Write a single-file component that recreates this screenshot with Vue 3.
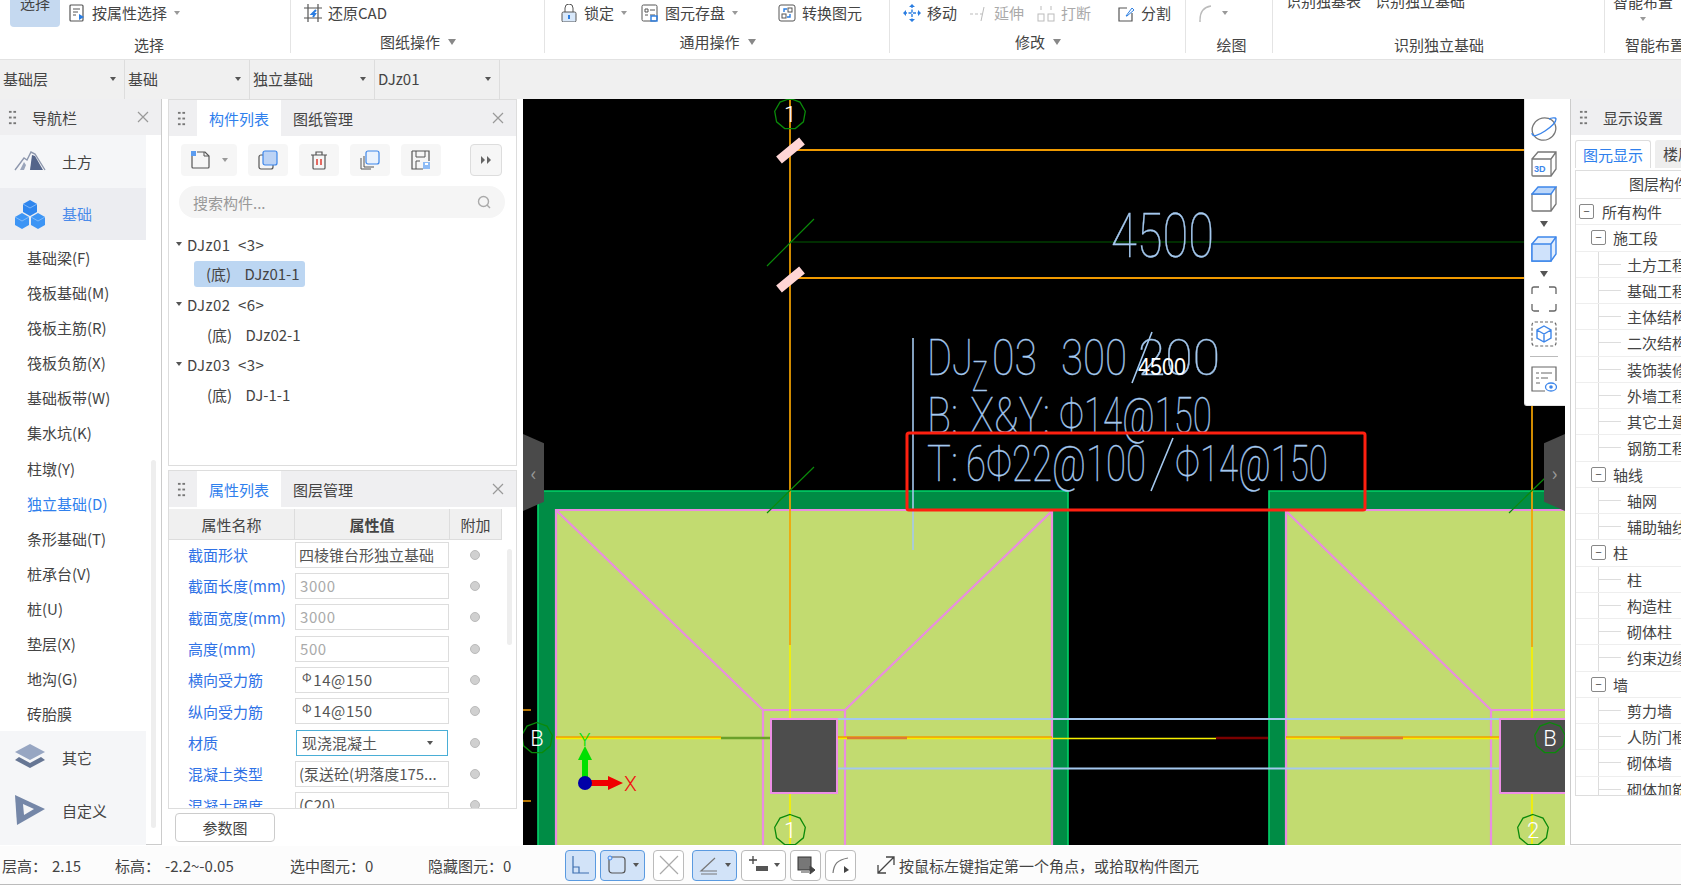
<script setup>
const icons = {
  attr: '<rect x="2" y="1" width="13" height="16" rx="1" fill="none" stroke="#555" stroke-width="1.2"/><path d="M5 5h7M5 8h5M5 11h3" stroke="#555"/><path d="M11 10l5 3-5 3z" fill="#2a7de1"/>',
  cad: '<path d="M4 0v18M14 0v18M0 4h18M0 14h18" stroke="#555" stroke-width="1.2"/><path d="M12 6l-4 4h3l-2 3" stroke="#2a7de1" stroke-width="2" fill="none"/>',
  lock: '<rect x="2" y="8" width="14" height="10" rx="1.5" fill="#d8e8fa" stroke="#555"/><path d="M5 8V4a4 4 0 018 0v4" fill="none" stroke="#555"/><rect x="8" y="11" width="2" height="4" fill="#2a7de1"/>',
  save: '<rect x="1" y="1" width="15" height="16" rx="1.5" fill="none" stroke="#555"/><path d="M4 5h3v3H4zM9 6h5M4 11h3M9 11h5" stroke="#555" fill="none"/><rect x="10" y="12" width="6" height="5" fill="none" stroke="#2a7de1" stroke-width="1.4"/>',
  conv: '<rect x="1" y="1" width="16" height="16" rx="2" fill="none" stroke="#555"/><path d="M6 8V5h3M12 10v3H9" stroke="#2a7de1" fill="none" stroke-width="1.4"/><rect x="10" y="4" width="4" height="4" fill="none" stroke="#555"/><rect x="4" y="10" width="4" height="4" fill="none" stroke="#555"/>',
  move: '<path d="M9 1v16M1 9h16" stroke="#2a7de1" stroke-width="1.4" stroke-dasharray="3 1.5"/><path d="M9 0l3 3H6zM9 18l3-3H6zM0 9l3-3v6zM18 9l-3-3v6z" fill="#2a7de1"/>',
  ext: '<path d="M0 10h3M5 10h3M10 10h2" stroke="#bbb"/><path d="M14 3l-3 14" stroke="#bbb"/>',
  brk: '<path d="M4 2v4M14 2v4" stroke="#bbb"/><rect x="1" y="10" width="6" height="7" fill="none" stroke="#bbb"/><rect x="11" y="10" width="6" height="7" fill="none" stroke="#bbb"/>',
  split: '<path d="M10 4H2v13h13V9" fill="none" stroke="#555" stroke-width="1.2"/><path d="M9 12l6-8 2 2-7 6z" fill="none" stroke="#2a7de1"/>',
  arc: '<path d="M3 16c0-8 4-13 11-14" fill="none" stroke="#bbb" stroke-width="1.3"/><circle cx="3" cy="17" r="1" fill="#bbb"/>'
}
const groups = [
  { w: 291, pad: 68, cls: 'g-sel', label: '选择', items: [{ i: 'attr', t: '按属性选择', c: 1, ml: 0 }] },
  { w: 254, pad: 13, label: '图纸操作', c: 1, items: [{ i: 'cad', t: '还原CAD', ml: 0 }] },
  { w: 345, pad: 15, label: '通用操作', c: 1, items: [{ i: 'lock', t: '锁定', c: 1, ml: 0 }, { i: 'save', t: '图元存盘', c: 1, ml: 14 }, { i: 'conv', t: '转换图元', ml: 40 }] },
  { w: 296, pad: 13, label: '修改', c: 1, items: [{ i: 'move', t: '移动', ml: 0 }, { i: 'ext', t: '延伸', g: 1, ml: 13 }, { i: 'brk', t: '打断', g: 1, ml: 13 }, { i: 'split', t: '分割', ml: 26 }] },
  { w: 87, pad: 11, cls: 'g-draw', label: '绘图', items: [{ i: 'arc', t: '', c: 1, g: 1, ml: 0 }] }
]
const selects = ['基础层', '基础', '独立基础', 'DJz01']
const navList = ['基础梁(F)', '筏板基础(M)', '筏板主筋(R)', '筏板负筋(X)', '基础板带(W)', '集水坑(K)', '柱墩(Y)', '独立基础(D)', '条形基础(T)', '桩承台(V)', '桩(U)', '垫层(X)', '地沟(G)', '砖胎膜']
const tree = [
  { t: 'DJz01  <3>', top: 1 }, { t: '(底)    DJz01-1', sel: 1 },
  { t: 'DJz02  <6>', top: 1 }, { t: '(底)    DJz02-1' },
  { t: 'DJz03  <3>', top: 1 }, { t: '(底)    DJ-1-1' }
]
const props = [
  { n: '截面形状', v: '四棱锥台形独立基础' },
  { n: '截面长度(mm)', v: '3000', dis: 1 },
  { n: '截面宽度(mm)', v: '3000', dis: 1 },
  { n: '高度(mm)', v: '500', dis: 1 },
  { n: '横向受力筋', v: '14@150', bar: 1 },
  { n: '纵向受力筋', v: '14@150', bar: 1 },
  { n: '材质', v: '现浇混凝土', sel: 1 },
  { n: '混凝土类型', v: '(泵送砼(坍落度175...' },
  { n: '混凝土强度', v: '(C20)' }
]
const layers = [
  ['所有构件', 0], ['施工段', 1], ['土方工程', 2], ['基础工程', 2], ['主体结构工程', 2], ['二次结构工程', 2], ['装饰装修工程', 2], ['外墙工程', 2], ['其它土建', 2], ['钢筋工程', 2],
  ['轴线', 1], ['轴网', 2], ['辅助轴线', 2], ['柱', 1], ['柱', 2], ['构造柱', 2], ['砌体柱', 2], ['约束边缘', 2], ['墙', 1], ['剪力墙', 2], ['人防门框墙', 2], ['砌体墙', 2], ['砌体加筋', 2]
]
const stats = [['层高：', '2.15'], ['标高：', '-2.2~-0.05'], ['选中图元：', '0'], ['隐藏图元：', '0']]
const poly = (x, y, r) => Array.from({ length: 9 }, (_, k) => {
  const a = (k / 9) * Math.PI * 2 - Math.PI / 2
  return (x + r * Math.cos(a)).toFixed(1) + ',' + (y + r * Math.sin(a)).toFixed(1)
}).join(' ')
const bubbles = [
  { x: 790, y: 114, t: '1' }, { x: 790, y: 830, t: '1' }, { x: 1533, y: 830, t: '2' },
  { x: 537, y: 738, t: 'B' }, { x: 1550, y: 738, t: 'B' }
].map(b => ({ ...b, pts: poly(b.x, b.y, 15.5) }))
</script>

<template>
  <div class="app">
    <header class="ribbon">
      <section v-for="g in groups" :key="g.label" class="group" :class="g.cls" :style="{ width: g.w + 'px' }">
        <div v-if="g.cls === 'g-sel'" class="pick">选择</div>
        <div class="row" :style="{ paddingLeft: g.pad + 'px' }">
          <div v-for="it in g.items" :key="it.i" class="ritem" :class="{ gray: it.g }" :style="{ marginLeft: it.ml + 'px' }">
            <svg width="18" height="18" viewBox="0 0 18 18" v-html="icons[it.i]"></svg>
            <span v-if="it.t">{{ it.t }}</span>
            <i v-if="it.c" class="tri small"></i>
          </div>
        </div>
        <div class="glabel" :class="{ plain: !g.c }">{{ g.label }}<i v-if="g.c" class="tri"></i></div>
      </section>
      <section class="group rec">
        <div class="rec-top"><span>识别独基表</span><span>识别独立基础</span></div>
        <div class="glabel plain">识别独立基础</div>
      </section>
      <section class="group smart">
        <div class="smart-top"><span>智能布置</span><i class="tri small"></i></div>
        <div class="glabel plain">智能布置</div>
      </section>
    </header>

    <div class="selbar">
      <div v-for="s in selects" :key="s" class="sel"><span>{{ s }}</span><i class="tri small dark"></i></div>
    </div>

    <main class="main">
      <aside class="nav">
        <div class="phead">
          <span class="dots"></span><span class="ptitle nav-title">导航栏</span>
          <svg class="close" width="12" height="12" viewBox="0 0 12 12"><path d="M1 1l10 10M11 1L1 11" stroke="#999" stroke-width="1.2"/></svg>
        </div>
        <div class="navcol">
          <div class="navbig">
            <svg width="32" height="24" viewBox="0 0 32 24"><path d="M1 21L10 9l3 2 4-8 4 2 10 16" fill="none" stroke="#8d97ad" stroke-width="1.4"/><path d="M16 21l2-15 3 1 8 14z" fill="#54658a"/><path d="M6 21l4-8 2 3-2 5z" fill="#9aa5bb"/></svg>
            <span>土方</span>
          </div>
          <div class="navbig active">
            <svg width="32" height="30" viewBox="0 0 32 30"><path d="M16 1l7 4v8l-7 4-7-4V5z" fill="#2f86ee"/><path d="M8 14l7 4v8l-7 4-7-4v-8z" fill="#3d95f5"/><path d="M24 14l7 4v8l-7 4-7-4v-8z" fill="#3d95f5"/><path d="M9 5l7 4 7-4M1 18l7 4 7-4M17 18l7 4 7-4" fill="none" stroke="#8fc2fa" stroke-width=".8"/></svg>
            <span>基础</span>
          </div>
          <div class="navlist">
            <div v-for="n in navList" :key="n" class="navitem" :class="{ cur: n.startsWith('独立') }">{{ n }}</div>
          </div>
          <div class="navbig">
            <svg width="32" height="30" viewBox="0 0 32 30"><path d="M16 1l15 8-15 8L1 9z" fill="#97a6c2"/><path d="M5 14l11 6 11-6 4 3-15 8-15-8z" fill="#667694"/></svg>
            <span>其它</span>
          </div>
          <div class="navbig last">
            <svg width="32" height="32" viewBox="0 0 32 32"><path d="M1 1l30 14L3 31z" fill="#7587a8"/><path d="M9 10l11 5-10 6z" fill="#f5f6f8"/></svg>
            <span>自定义</span>
          </div>
        </div>
        <div class="navscroll"></div>
      </aside>

      <div class="mid">
        <section class="panel p1">
          <div class="phead">
            <span class="dots"></span>
            <span class="tab on">构件列表</span><span class="tab">图纸管理</span>
            <svg class="close" width="12" height="12" viewBox="0 0 12 12"><path d="M1 1l10 10M11 1L1 11" stroke="#999" stroke-width="1.2"/></svg>
          </div>
          <div class="tools">
            <div class="tbtn wide">
              <svg width="20" height="20" viewBox="0 0 20 20"><path d="M2 5v12a1 1 0 001 1h15a1 1 0 001-1V6l-4-4H7" fill="none" stroke="#555" stroke-width="1.2"/><path d="M14 2v4h5" fill="none" stroke="#555"/><rect x="1" y="1" width="5" height="5" fill="#5b9cf0"/></svg>
              <i class="tri small"></i>
            </div>
            <div class="tbtn"><svg width="20" height="20" viewBox="0 0 20 20"><rect x="1" y="5" width="14" height="14" rx="2" fill="none" stroke="#555" stroke-width="1.2"/><rect x="5" y="1" width="14" height="14" rx="2" fill="#bcd3f5" stroke="#3d86ea" stroke-width="1.2"/></svg></div>
            <div class="tbtn"><svg width="20" height="20" viewBox="0 0 20 20"><path d="M2 5h16M7 5V2h6v3M4 5v13a1 1 0 001 1h10a1 1 0 001-1V5" fill="none" stroke="#555" stroke-width="1.2"/><path d="M8 9v6M12 9v6" stroke="#e0483e" stroke-width="1.6"/></svg></div>
            <div class="tbtn"><svg width="20" height="20" viewBox="0 0 20 20"><rect x="6" y="1" width="13" height="13" rx="2" fill="#eaf2fd" stroke="#3d86ea" stroke-width="1.2"/><path d="M4 6v11h10M1 8v11h10" fill="none" stroke="#555"/></svg></div>
            <div class="tbtn"><svg width="20" height="20" viewBox="0 0 20 20"><path d="M1 1h17v10M12 19H1V1" fill="none" stroke="#555" stroke-width="1.2"/><path d="M5 1v6h9V1M5 19v-8h4" fill="none" stroke="#555"/><path d="M12 12h7v7h-7z" fill="#8dbbf5"/><path d="M14 13h3v2h-3z" fill="#fff"/></svg></div>
            <div class="tbtn end"><svg width="10" height="8" viewBox="0 0 10 8"><path d="M0 0l4 4-4 4zM6 0l4 4-4 4z" fill="#666"/></svg></div>
          </div>
          <div class="search">
            <span>搜索构件...</span>
            <svg width="14" height="14" viewBox="0 0 14 14"><circle cx="6.5" cy="6.5" r="5" fill="none" stroke="#aaa" stroke-width="1.4"/><path d="M10 10l3 3" stroke="#aaa" stroke-width="1.4"/></svg>
          </div>
          <div class="tree">
            <div v-for="r in tree" :key="r.t" class="trow" :class="{ top: r.top }">
              <i v-if="r.top" class="tri small dark"></i>
              <span :class="{ chosen: r.sel }">{{ r.t }}</span>
            </div>
          </div>
        </section>

        <section class="panel p2">
          <div class="phead">
            <span class="dots"></span>
            <span class="tab on">属性列表</span><span class="tab">图层管理</span>
            <svg class="close" width="12" height="12" viewBox="0 0 12 12"><path d="M1 1l10 10M11 1L1 11" stroke="#999" stroke-width="1.2"/></svg>
          </div>
          <div class="thead"><span>属性名称</span><b>属性值</b><span>附加</span></div>
          <div class="tbody">
            <div v-for="p in props" :key="p.n" class="prow">
              <span class="pname">{{ p.n }}</span>
              <span class="pval" :class="{ dis: p.dis, focus: p.sel, num: p.dis || p.bar }">
                <sup v-if="p.bar">Φ</sup>{{ p.v }}<i v-if="p.sel" class="tri small dark"></i>
              </span>
              <span class="radio"></span>
            </div>
            <div class="pscroll"></div>
          </div>
        </section>
        <div class="pbtn"><button>参数图</button></div>
      </div>

      <div class="canvas">
        <svg class="cad" width="1042" height="746" viewBox="523 99 1042 746">
          <rect x="523" y="99" width="1042" height="746" fill="#000"/>
          <!-- walls -->
          <path d="M538 845V491H1068V845H1053V510H556V845ZM1269 845V491H1565V510H1286V845Z" fill="#008c45"/>
          <path d="M538 845V491H1068V845M1269 845V491H1565" fill="none" stroke="#00d468" stroke-width="1.6"/>
          <rect x="556" y="510" width="496" height="335" fill="#c2db70"/>
          <rect x="1286" y="510" width="279" height="335" fill="#c2db70"/>
          <g fill="none" stroke="#e98de0" stroke-width="2.2">
            <path d="M556 845V510H1052V845"/>
            <path d="M1565 510H1286V845"/>
            <path d="M557 511L763 710H845L1052 511"/>
            <path d="M763 710V845M845 710V845"/>
            <path d="M1286 511L1491 710H1565M1491 710V845"/>
          </g>
          <!-- axis lines -->
          <path d="M790 99V645M1532 406V647" stroke="#f5a300" stroke-width="1.7"/>
          <path d="M790 645V719M790 793V845M1532 647V719M1532 793V845" stroke="#f6f000" stroke-width="1.7"/>
          <path d="M790 150H1524M790 278H1524" stroke="#f09a00" stroke-width="2"/>
          <path d="M790 242H1524" stroke="#005a00" stroke-width="1.2"/>
          <path d="M767 266L814 219M767 513L814 467M1509 513L1545 478" stroke="#0a8a0a" stroke-width="1.2"/>
          <path d="M779 160L802 141M779 289L802 270" stroke="#ffd6d6" stroke-width="9"/>
          <path d="M837 719H1500M837 768.5H1500" stroke="#a4c8ee" stroke-width="2"/>
          <path d="M556 737.5H721M837 737.5H1052M1286 737.5H1500" stroke="#f0a000" stroke-width="2.6"/>
          <path d="M556 738.5H721M837 738.5H1216M1286 738.5H1500" stroke="#f6f000" stroke-width="1.4"/>
          <path d="M721 738H771" stroke="#6aa02a" stroke-width="2.4"/>
          <path d="M847 738H907M1340 738H1403" stroke="#dd7a35" stroke-width="2.4"/>
          <path d="M1216 738H1268" stroke="#7a0000" stroke-width="2.4"/>
          <path d="M523 710H531M523 801H531" stroke="#f09a00" stroke-width="1.5"/>
          <rect x="771" y="719" width="66" height="74" fill="#4d4d4d" stroke="#ee8fe6" stroke-width="2"/>
          <rect x="1500" y="719" width="70" height="74" fill="#4d4d4d" stroke="#ee8fe6" stroke-width="2"/>
          <path d="M913 338V550" stroke="#a4c8ee" stroke-width="1.6"/>
          <path d="M1152 332L1132 383M1173 438L1151 491" stroke="#a4c8ee" stroke-width="1.6"/>
          <!-- cad text -->
          <g class="cadtext">
            <text x="1111" y="257" font-size="62" textLength="103" lengthAdjust="spacingAndGlyphs">4500</text>
            <text x="927" y="375" font-size="50" textLength="46" lengthAdjust="spacingAndGlyphs">DJ</text>
            <text x="972" y="391" font-size="42" textLength="16" lengthAdjust="spacingAndGlyphs">Z</text>
            <text x="992" y="375" font-size="50" textLength="45" lengthAdjust="spacingAndGlyphs">03</text>
            <text x="1061" y="375" font-size="50" textLength="66" lengthAdjust="spacingAndGlyphs">300</text>
            <text x="1138" y="375" font-size="50" textLength="82" lengthAdjust="spacingAndGlyphs">200</text>
            <text x="927" y="433" font-size="50" textLength="31" lengthAdjust="spacingAndGlyphs">B:</text>
            <text x="970" y="433" font-size="50" textLength="80" lengthAdjust="spacingAndGlyphs">X&amp;Y:</text>
            <text x="1059" y="433" font-size="50" textLength="153" lengthAdjust="spacingAndGlyphs">Φ14@150</text>
            <text x="927" y="481" font-size="50" textLength="31" lengthAdjust="spacingAndGlyphs">T:</text>
            <text x="966" y="481" font-size="50" textLength="180" lengthAdjust="spacingAndGlyphs">6Φ22@100</text>
            <text x="1175" y="481" font-size="50" textLength="153" lengthAdjust="spacingAndGlyphs">Φ14@150</text>
          </g>
          <text class="small4500" x="1138" y="375" font-size="24" textLength="48" lengthAdjust="spacingAndGlyphs">4500</text>
          <!-- axis bubbles -->
          <polygon v-for="b in bubbles" :key="b.x + b.t" :points="b.pts" fill="none" stroke="#0a8a0a" stroke-width="1.3"/>
          <g class="bub" text-anchor="middle" font-size="22">
            <text v-for="b in bubbles" :key="b.x + b.t" :x="b.x" :y="b.y + 8">{{ b.t }}</text>
          </g>
          <!-- origin -->
          <path d="M585 782V760" stroke="#00e000" stroke-width="6"/><path d="M578 760L585 746L592 760Z" fill="#00e000"/>
          <path d="M586 783H608" stroke="#f00000" stroke-width="6"/><path d="M608 776L623 783L608 790Z" fill="#f00000"/>
          <circle cx="585" cy="783" r="7" fill="#0000a8"/>
          <text x="579" y="746" font-size="19" fill="#00e000" class="thin">Y</text>
          <text x="624" y="791" font-size="21" fill="#f01010" class="thin">X</text>
          <rect x="907" y="433" width="458" height="77" rx="2" fill="none" stroke="#ff2010" stroke-width="3"/>
        </svg>
        <div class="handle hl"><span>‹</span></div>
        <div class="handle hr"><span>›</span></div>
        <div class="viewbar">
          <svg width="26" height="26" viewBox="0 0 26 26"><ellipse cx="13" cy="13" rx="12" ry="11" fill="none" stroke="#777" stroke-width="1.3" transform="rotate(-25 13 13)"/><path d="M1 17C1 22 8 19 14 15S25 6 25 3C25 1 20 2 18 3" fill="none" stroke="#3d86ea" stroke-width="1.4"/></svg>
          <svg width="26" height="26" viewBox="0 0 26 26"><path d="M1 8h19v17H2a1 1 0 01-1-1zM1 8l6-7h18v17l-5 7M20 8l5-7" fill="none" stroke="#777" stroke-width="1.3"/><text x="3" y="21" font-size="9" font-weight="700" fill="#3d86ea" font-family="Liberation Sans">3D</text></svg>
          <svg width="26" height="26" viewBox="0 0 26 26"><path d="M1 8h19v17H2a1 1 0 01-1-1zM20 25l5-7V1" fill="none" stroke="#777" stroke-width="1.3"/><path d="M1 8l6-7h18l-5 7z" fill="#bcd7fa" stroke="#3d86ea" stroke-width="1.3"/></svg>
          <i class="tri dark"></i>
          <svg width="26" height="26" viewBox="0 0 26 26"><path d="M1 8l6-7h18v17l-5 7H1z" fill="#e3eefd" stroke="#3d86ea" stroke-width="1.4"/><path d="M1 8h19v17H1zM20 8l5-7" fill="#cfe2fb" stroke="#3d86ea" stroke-width="1.4"/></svg>
          <i class="tri dark"></i>
          <svg width="26" height="26" viewBox="0 0 26 26"><path d="M1 8V3a2 2 0 012-2h5M18 1h5a2 2 0 012 2v5M25 18v5a2 2 0 01-2 2h-5M8 25H3a2 2 0 01-2-2v-5" fill="none" stroke="#666" stroke-width="1.3"/></svg>
          <svg width="26" height="26" viewBox="0 0 26 26"><rect x="1" y="1" width="24" height="24" rx="3" fill="none" stroke="#666" stroke-width="1.2" stroke-dasharray="3 2"/><path d="M13 5l7 4v8l-7 4-7-4V9zM6 9l7 4 7-4M13 13v8" fill="none" stroke="#3d86ea" stroke-width="1.4"/></svg>
          <div class="vsep"></div>
          <svg width="26" height="26" viewBox="0 0 26 26"><path d="M25 15V1H1v24h13" fill="none" stroke="#666" stroke-width="1.2"/><path d="M5 7h3M10 7h11M5 12h3M10 12h7M5 17h4" stroke="#666"/><ellipse cx="20" cy="21" rx="5.5" ry="4" fill="none" stroke="#3d86ea" stroke-width="1.3"/><circle cx="20" cy="21" r="1.8" fill="#3d86ea"/></svg>
        </div>
      </div>

      <aside class="rpanel">
        <div class="phead"><span class="dots"></span><span class="ptitle right-title">显示设置</span></div>
        <div class="rtabs"><span class="rtab on">图元显示</span><span class="rtab">楼层显示</span></div>
        <div class="rtable">
          <div class="rhead">图层构件</div>
          <div v-for="(l, i) in layers" :key="i" class="lrow" :class="'lv' + l[1]">
            <span v-if="l[1] < 2" class="box">−</span>
            <span v-else class="dash"></span>
            <span class="ltext">{{ l[0] }}</span>
          </div>
        </div>
      </aside>
    </main>

    <footer class="status">
      <span v-for="s in stats" :key="s[0]" class="stat"><span>{{ s[0] }}</span><span class="sv">{{ s[1] }}</span></span>
      <div class="sbtns">
        <span class="sb on w1"><svg width="20" height="20" viewBox="0 0 20 20"><path d="M2 1v17h16M2 12h6v6" fill="none" stroke="#3d6fb0" stroke-width="1.2"/></svg></span>
        <span class="sb on w2"><svg width="20" height="20" viewBox="0 0 20 20"><rect x="2" y="2" width="16" height="16" rx="3" fill="none" stroke="#555" stroke-width="1.2"/><circle cx="3" cy="3" r="2" fill="#d2e3f8" stroke="#3d86ea"/></svg><i class="tri small dark"></i></span>
        <span class="sb w1"><svg width="22" height="22" viewBox="0 0 22 22"><path d="M2 2l18 18M20 2L2 20" stroke="#aaa" stroke-width="1.2"/></svg></span>
        <span class="sb on w2"><svg width="20" height="20" viewBox="0 0 20 20"><path d="M16 3L2 16h16M2 19h16" fill="none" stroke="#777" stroke-width="1.2"/></svg><i class="tri small dark"></i></span>
        <span class="sb w2"><svg width="20" height="20" viewBox="0 0 20 20"><path d="M1 5h8M5 1v8" stroke="#444" stroke-width="1.3"/><rect x="8" y="11" width="12" height="5" fill="#555"/></svg><i class="tri small dark"></i></span>
        <span class="sb w1"><svg width="20" height="20" viewBox="0 0 20 20"><rect x="2" y="2" width="13" height="13" fill="#777" stroke="#333"/><path d="M5 17h8M14 11l5 4-5 4z" fill="#444" stroke="#444"/></svg></span>
        <span class="sb w1"><svg width="20" height="20" viewBox="0 0 20 20"><path d="M2 18C3 9 6 5 17 3" fill="none" stroke="#777" stroke-width="1.2"/><path d="M13 11l5 4-5 3z" fill="#444"/></svg></span>
      </div>
      <svg class="corner" width="20" height="20" viewBox="0 0 20 20"><path d="M2 18L18 2M10 2h8v8M2 10v8h8" fill="none" stroke="#444" stroke-width="1.3"/></svg>
      <span class="hint">按鼠标左键指定第一个角点，或拾取构件图元</span>
    </footer>
  </div>
</template>

<style>
html, body { margin: 0; background: #fff; }
</style>

<style scoped>
.app { width: 1681px; height: 885px; overflow: hidden; display: flex; flex-direction: column; font: 15px "Noto Sans CJK SC", "Liberation Sans", sans-serif; color: #444; background: #fff; }
.tri { display: inline-block; width: 0; height: 0; border-left: 4.5px solid transparent; border-right: 4.5px solid transparent; border-top: 6px solid #888; }
.tri.small { border-left-width: 3px; border-right-width: 3px; border-top-width: 4px; border-top-color: #999; }
.tri.dark { border-top-color: #555; }

.ribbon { height: 59px; display: flex; flex: none; border-bottom: 1px solid #e2e2e2; }
.group { position: relative; height: 59px; flex: none; box-sizing: border-box; display: flex; flex-direction: column; overflow: hidden; }
.group::after { content: ""; position: absolute; right: 0; top: 0; width: 1px; height: 53px; background: #e4e4e4; }
.pick { position: absolute; left: 10px; top: 0; width: 50px; height: 27px; background: #c5d9f0; border-radius: 0 0 4px 4px; text-align: center; line-height: 6px; overflow: hidden; }
.row { height: 25px; flex: none; display: flex; align-items: center; }
.ritem { display: flex; align-items: center; gap: 6px; white-space: nowrap; }
.ritem.gray { color: #aaa; }
.ritem .tri { margin-left: 1px; }
.glabel { flex: none; height: 20px; margin-top: 7px; display: flex; align-items: center; justify-content: center; gap: 8px; line-height: 20px; }
.glabel.plain { margin-top: 10px; }
.g-sel .glabel { padding-left: 7px; }
.g-draw .glabel { padding-left: 4px; }
.rec { width: 332px; }
.rec-top { height: 25px; flex: none; display: flex; align-items: flex-start; gap: 14px; padding-left: 13px; }
.rec-top span { line-height: 20px; margin-top: -9px; }
.smart { width: 77px; }
.smart::after { display: none; }
.smart-top { height: 25px; flex: none; width: 76px; display: flex; flex-direction: column; align-items: center; gap: 5px; }
.smart-top span { line-height: 20px; margin-top: -8px; }
.smart .glabel { justify-content: flex-start; padding-left: 20px; white-space: nowrap; }

.selbar { height: 39px; flex: none; background: #f0f0f0; display: flex; }
.sel { width: 125px; box-sizing: border-box; border-right: 1px solid #ddd; display: flex; align-items: center; justify-content: space-between; padding: 0 8px 2px 3px; }

.main { height: 747px; flex: none; display: flex; }
.phead { height: 36px; flex: none; background: #efeff1; display: flex; align-items: center; position: relative; }
.dots { position: absolute; left: 8px; top: 10px; width: 9px; height: 17px; background-image: radial-gradient(circle, #777 1.2px, transparent 1.4px); background-size: 4.5px 5.7px; }
.close { position: absolute; right: 12px; top: 12px; }
.ptitle { position: absolute; top: 8px; }
.nav-title, .right-title { left: 32px; }

.nav { width: 162px; flex: none; box-sizing: border-box; border-right: 1px solid #ccc; position: relative; height: 746px; border-bottom: 1px solid #ccc; }
.navcol { width: 146px; }
.navbig { height: 52.5px; display: flex; align-items: center; gap: 16px; padding-left: 14px; background: #f5f6f8; }
.navbig.last { height: 61px; padding-bottom: 8px; box-sizing: border-box; }
.navbig svg { width: 32px; flex: none; }
.navbig.active { background: #ecedf1; color: #4a8bea; }
.navitem { height: 35.1px; line-height: 35.1px; padding-left: 27px; }
.navitem.cur { color: #2f80ed; }
.navscroll { position: absolute; left: 151px; top: 361px; width: 5px; height: 368px; background: #eee; border-radius: 3px; }

.mid { width: 349px; margin-left: 6px; flex: none; display: flex; flex-direction: column; }
.panel { box-sizing: border-box; border: 1px solid #ddd; background: #fff; overflow: hidden; flex: none; width: 349px; }
.p1 { height: 367px; }
.p2 { height: 339px; margin-top: 4px; }
.tab { width: 84px; height: 100%; display: flex; align-items: center; justify-content: center; }
.tab.on { background: #fff; color: #2f80ed; margin-left: 28px; }
.tools { display: flex; margin: 8px 0 0 12px; height: 32px; gap: 11px; }
.tbtn { width: 40px; background: #f6f6f6; border-radius: 4px; display: flex; align-items: center; justify-content: center; }
.tbtn.wide { width: 56px; justify-content: flex-start; padding-left: 9px; gap: 12px; box-sizing: border-box; }
.tbtn.end { width: 32px; margin-left: 18px; border: 1px solid #ddd; box-sizing: border-box; }
.search { margin: 10px 11px 0 10px; height: 32px; border-radius: 16px; background: #f5f5f5; display: flex; align-items: center; justify-content: space-between; padding: 0 14px; color: #999; }
.tree { margin-top: 11px; }
.trow { height: 30px; display: flex; align-items: center; padding-left: 38px; white-space: pre; }
.trow.top { padding-left: 7px; gap: 5px; letter-spacing: .4px; }
.chosen { background: #bcd6f2; border-radius: 3px; padding: 3px 5px 3px 12px; margin-left: -13px; line-height: 20px; }

.thead { display: grid; grid-template-columns: 126px 155px 52px; height: 31px; margin-top: 2px; background: #f0f0f0; text-align: center; line-height: 31px; width: 333px; box-sizing: border-box; border-bottom: 1px solid #ddd; }
.thead > * { border-right: 1px solid #ddd; font-weight: normal; }
.thead b { font-weight: 700; }
.tbody { position: relative; margin-top: -1px; }
.prow { display: grid; grid-template-columns: 126px 154px 52px; height: 31.33px; align-items: center; }
.pname { padding-left: 19px; color: #2f72e6; white-space: nowrap; }
.pval { height: 26px; box-sizing: border-box; border: 1px solid #ddd; padding: 0 3px; line-height: 23px; color: #555; white-space: nowrap; overflow: hidden; position: relative; }
.pval.dis { color: #aaa; }
.pval.num { letter-spacing: .6px; padding-left: 4px; }
.pval.focus { border: 1.5px solid #4aaed6; margin: 0 1px; padding-left: 5px; }
.pval.focus .tri { position: absolute; right: 14px; top: 10px; }
.pval sup { font-size: 12px; vertical-align: 4px; line-height: 0; margin: 0 1px 0 2px; }
.radio { width: 10px; height: 10px; border-radius: 50%; background: #d0d0d0; border: 1px solid #bbb; justify-self: center; box-sizing: border-box; }
.pscroll { position: absolute; left: 338px; top: 10px; width: 5px; height: 96px; background: #eee; border-radius: 3px; }
.pbtn { padding: 4px 0 0 7px; }
.pbtn button { width: 100px; height: 29px; background: #fff; border: 1px solid #ccc; border-radius: 4px; font: inherit; color: #444; padding: 0; }

.canvas { position: relative; width: 1042px; height: 746px; margin-left: 6px; flex: none; overflow: hidden; background: #000; }
.cad { display: block; }
.cadtext text { fill: #a4c8ee; stroke: #a4c8ee; stroke-width: .35; font-family: "Roboto", "Liberation Sans", sans-serif; font-weight: 100; }
.small4500 { fill: #fff; font-family: "Liberation Sans", sans-serif; }
.bub text { fill: #fff; font-family: "Roboto", "Liberation Sans", sans-serif; font-weight: 300; }
.thin { font-family: "Roboto", "Liberation Sans", sans-serif; font-weight: 300; }
.handle { position: absolute; top: 335px; width: 21px; height: 77px; background: #4a4a4a; color: #999; display: flex; align-items: center; justify-content: center; font-size: 20px; }
.handle.hl { left: 0; clip-path: polygon(0 0, 100% 12%, 100% 88%, 0 100%); }
.handle.hr { right: 0; clip-path: polygon(0 12%, 100% 0, 100% 100%, 0 88%); }
.viewbar { position: absolute; right: 0; top: 0; width: 41px; height: 307px; box-sizing: border-box; background: #fff; border: 1px solid #e4e4e4; border-width: 0 0 1px 1px; border-radius: 0 0 0 3px; display: flex; flex-direction: column; align-items: center; padding: 17px 3px 0 0; gap: 9px; }
.viewbar svg { flex: none; }
.viewbar .tri { flex: none; }
.vsep { width: 28px; height: 1px; background: #bbb; flex: none; }

.rpanel { width: 111px; margin-left: 5px; box-sizing: border-box; flex: none; border-left: 1px solid #ccc; overflow: hidden; height: 746px; border-bottom: 1px solid #ccc; }
.rtabs { display: flex; gap: 4px; margin: 5px 0 0 4px; height: 28px; width: 200px; }
.rtab { width: 76px; flex: none; text-align: center; line-height: 28px; background: #eee; border-radius: 3px 3px 0 0; }
.rtab.on { background: #fff; color: #2f80ed; border: 1px solid #ddd; border-bottom: 0; box-sizing: border-box; }
.rtable { margin: 2px 0 0 4px; width: 200px; border: 1px solid #ddd; border-right: 0; height: 626px; overflow: hidden; box-sizing: border-box; }
.rhead { height: 28px; box-sizing: border-box; padding-left: 53px; line-height: 25px; white-space: nowrap; border-bottom: 1px solid #e4e4e4; }
.lrow { height: 26.25px; box-sizing: border-box; border-bottom: 1px solid #eee; display: flex; align-items: center; white-space: nowrap; }
.box { width: 15px; height: 15px; box-sizing: border-box; border: 1px solid #888; border-radius: 2px; display: flex; align-items: center; justify-content: center; font-size: 11px; line-height: 1; flex: none; }
.lv0 { padding-left: 3px; }
.lv0 .box { margin-right: 8px; }
.lv1 { padding-left: 15px; }
.lv1 .box { margin-right: 7px; }
.lv2 { padding-left: 23px; background: linear-gradient(#ddd, #ddd) 22px 0 / 1px 100% no-repeat; }
.dash { width: 22px; flex: none; margin-right: 6px; border-top: 1px solid #ddd; }

.status { height: 39px; flex: none; box-sizing: border-box; background: #fcfcfc; border-bottom: 1px solid #bbb; display: flex; align-items: center; }
.stat { display: flex; flex: none; padding-left: 2px; box-sizing: border-box; }
.stat:nth-child(1) { width: 113px; }
.stat:nth-child(2) { width: 175px; }
.stat:nth-child(3) { width: 138px; }
.stat:nth-child(4) { width: 139px; }
.sv { margin-left: 5px; }
.stat:nth-child(3) .sv, .stat:nth-child(4) .sv { margin-left: 0; }
.sbtns { display: flex; gap: 4px; flex: none; }
.sb { height: 31px; box-sizing: border-box; border: 1px solid #bbb; border-radius: 4px; display: flex; align-items: center; justify-content: center; gap: 6px; background: #fff; }
.sb.on { background: #d2e3f8; border-color: #5a9ae0; }
.w1 { width: 31px; }
.w2 { width: 45px; }
.sb:nth-child(3), .sb:nth-child(4) { margin-left: 4px; }
.corner { margin-left: 20px; flex: none; }
.hint { margin-left: 3px; white-space: nowrap; }
</style>
